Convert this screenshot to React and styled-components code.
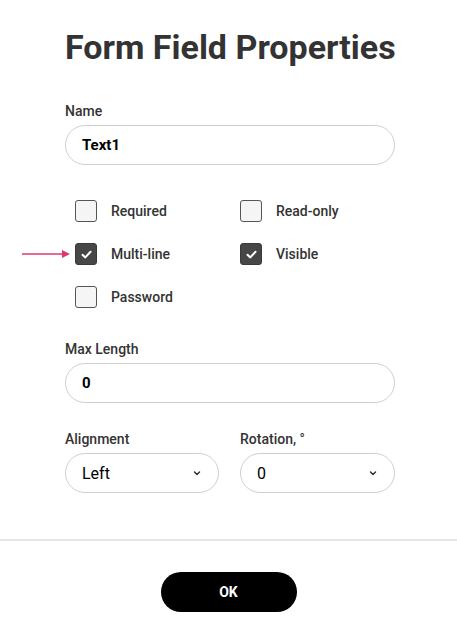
import React from 'react';
import styled, { createGlobalStyle } from 'styled-components';

const GlobalStyle = createGlobalStyle`
    html, body {
        margin: 0;
        padding: 0;
        background: #fff;
        font-family: Roboto, "Liberation Sans", sans-serif;
        color: #333;
    }
`;

function ChevronIcon() {
    return (
        <svg width='10' height='10' viewBox='0 0 10 10'>
            <path d='M2.5 4 L5 6.5 L7.5 4' fill='none' stroke='#333' strokeWidth='1.5' strokeLinecap='round' strokeLinejoin='round'/>
        </svg>
    );
}

function Checkbox({ label, checked, pointed }) {
    return (
        <CheckRow>
            {pointed && (
                <Pointer width='50' height='10' viewBox='0 0 50 10'>
                    <line x1='0' y1='5' x2='42' y2='5' stroke='#e0356f' strokeWidth='1.5'/>
                    <path d='M40 1 L48 5 L40 9 Z' fill='#e0356f'/>
                </Pointer>
            )}
            <Box checked={checked}>
                {checked && (
                    <svg width='13' height='13' viewBox='0 0 12 12'>
                        <path d='M2.3 6.3 L4.9 8.7 L9.7 3.5' fill='none' stroke='#fff' strokeWidth='1.9' strokeLinecap='round' strokeLinejoin='round'/>
                    </svg>
                )}
            </Box>
            <CheckLabel>{label}</CheckLabel>
        </CheckRow>
    );
}

function App() {
    return (
        <>
            <GlobalStyle/>
            <Dialog>
                <Body>
                    <Title>Form Field Properties</Title>

                    <Field>
                        <Label>Name</Label>
                        <TextInput bold>Text1</TextInput>
                    </Field>

                    <CheckGrid>
                        <Checkbox label='Required'/>
                        <Checkbox label='Read-only'/>
                        <Checkbox label='Multi-line' checked pointed/>
                        <Checkbox label='Visible' checked/>
                        <Checkbox label='Password'/>
                    </CheckGrid>

                    <Field>
                        <Label>Max Length</Label>
                        <TextInput bold>0</TextInput>
                    </Field>

                    <Columns>
                        <Field>
                            <Label>Alignment</Label>
                            <Select>
                                <span>Left</span>
                                <ChevronIcon/>
                            </Select>
                        </Field>
                        <Field>
                            <Label>Rotation, °</Label>
                            <Select>
                                <span>0</span>
                                <ChevronIcon/>
                            </Select>
                        </Field>
                    </Columns>
                </Body>
                <Footer>
                    <OkButton>OK</OkButton>
                </Footer>
            </Dialog>
        </>
    );
}

export default App;

const Dialog = styled.div`
    width: 457px;
    height: 636px;
    display: flex;
    flex-direction: column;
`;

const Body = styled.div`
    padding: 23px 62px 0 65px;
    display: flex;
    flex-direction: column;
    height: 539px;
    box-sizing: border-box;
`;

const Title = styled.h1`
    margin: 0 0 32px;
    font-size: 34px;
    font-weight: 700;
    line-height: 48px;
    color: #333;
    white-space: nowrap;
`;

const Field = styled.div`
    display: flex;
    flex-direction: column;
    gap: 6px;
`;

const Label = styled.div`
    font-size: 14px;
    font-weight: 500;
    line-height: 16px;
    color: #333;
`;

const TextInput = styled.div`
    height: 40px;
    box-sizing: border-box;
    border: 1px solid #cfcfcf;
    border-radius: 20px;
    padding: 0 16px;
    display: flex;
    align-items: center;
    font-size: 15px;
    font-weight: ${p => (p.bold ? 700 : 400)};
    color: #000;
`;

const CheckGrid = styled.div`
    display: grid;
    grid-template-columns: 165px 1fr;
    row-gap: 21px;
    padding: 35px 0 33px 10px;
`;

const CheckRow = styled.div`
    position: relative;
    display: flex;
    align-items: center;
    gap: 14px;
    height: 22px;
`;

const Pointer = styled.svg`
    position: absolute;
    left: -53px;
    top: 6px;
`;

const Box = styled.div`
    width: 22px;
    height: 22px;
    box-sizing: border-box;
    border-radius: 3px;
    border: 1px solid ${p => (p.checked ? '#3a3a3a' : '#555')};
    background: ${p => (p.checked ? '#474747' : '#f5f5f5')};
    display: flex;
    align-items: center;
    justify-content: center;
`;

const CheckLabel = styled.span`
    font-size: 14px;
    font-weight: 500;
    color: #333;
`;

const Columns = styled.div`
    display: grid;
    grid-template-columns: 154px 155px;
    column-gap: 21px;
    margin-top: 28px;
`;

const Select = styled.div`
    height: 40px;
    box-sizing: border-box;
    border: 1px solid #cfcfcf;
    border-radius: 20px;
    padding: 0 16px;
    display: flex;
    align-items: center;
    justify-content: space-between;
    font-size: 16px;
    color: #000;
`;

const Footer = styled.div`
    border-top: 2px solid #e6e6e6;
    flex: 1;
    display: flex;
    justify-content: center;
    padding-top: 31px;
`;

const OkButton = styled.button`
    width: 136px;
    height: 40px;
    border: none;
    border-radius: 20px;
    background: #000;
    color: #fff;
    font-family: Roboto, "Liberation Sans", sans-serif;
    font-size: 14px;
    font-weight: 700;
    cursor: pointer;
`;
